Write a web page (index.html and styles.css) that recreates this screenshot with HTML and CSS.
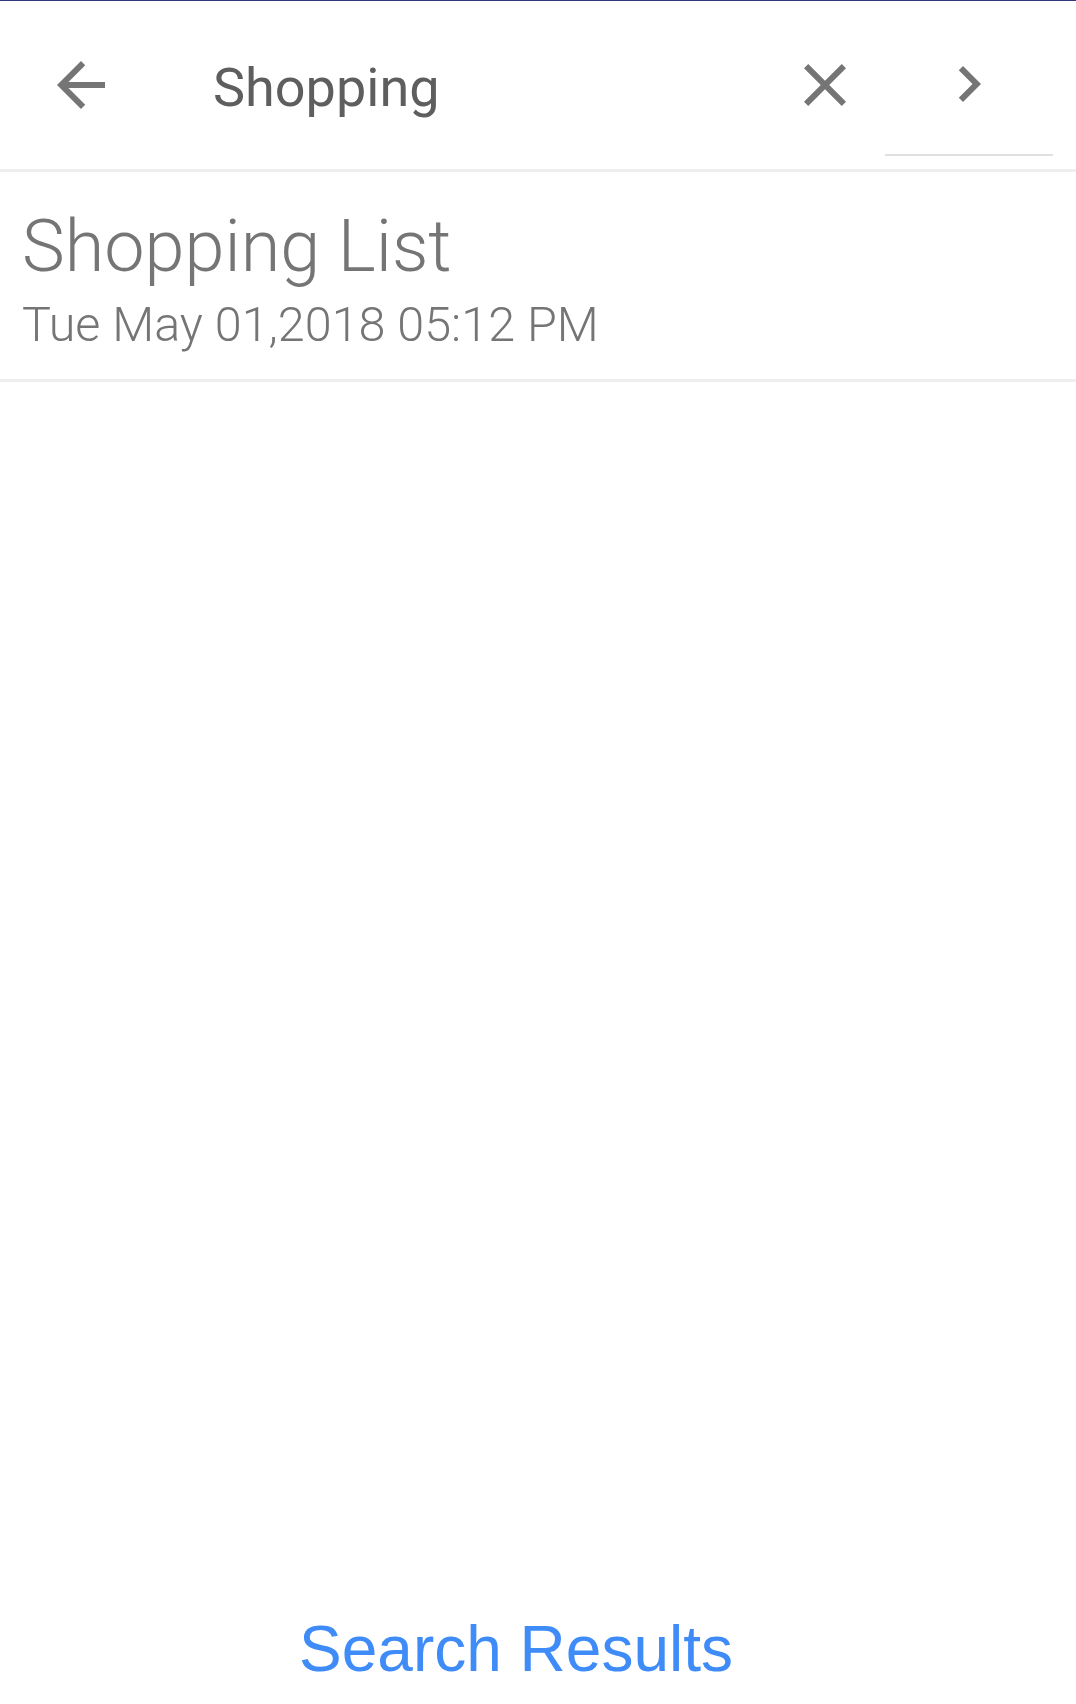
FILE: index.html
```html
<!DOCTYPE html>
<html lang="en">
<head>
  <meta charset="UTF-8" />
  <meta name="viewport" content="width=device-width, initial-scale=1.0" />
  <title>Search</title>
  <link rel="stylesheet" href="styles.css">
</head>
<body>
  <div id="app">
    <div class="toolbar">
      <button class="icon-btn back" aria-label="Back">
        <svg viewBox="0 0 24 24" width="72" height="72"><path d="M20 11H7.83l5.59-5.59L12 4l-8 8 8 8 1.41-1.41L7.83 13H20v-2z"/></svg>
      </button>
      <div class="query">Shopping</div>
      <button class="icon-btn clear" aria-label="Clear">
        <svg viewBox="0 0 24 24" width="72" height="72"><path d="M19 6.41L17.59 5 12 10.59 6.41 5 5 6.41 10.59 12 5 17.59 6.41 19 12 13.41 17.59 19 19 17.59 13.41 12z"/></svg>
      </button>
      <div class="next-wrap">
        <button class="icon-btn next" aria-label="Next">
          <svg viewBox="0 0 24 24" width="72" height="72"><path d="M10 6L8.59 7.41 13.17 12l-4.58 4.59L10 18l6-6z"/></svg>
        </button>
      </div>
    </div>

    <div class="result">
      <div class="result-title">Shopping List</div>
      <div class="result-date">Tue May 01,2018 05:12 PM</div>
    </div>

    <div class="footer">Search Results</div>
  </div>
</body>
</html>
```

FILE: styles.css
```css
body {
  margin: 0;
  background: #fff;
  font-family: Roboto, "Noto Sans", sans-serif;
}
#app {
  min-height: 1704px;
  display: flex;
  flex-direction: column;
  border-top: 1px solid #2f387a;
  box-sizing: border-box;
}
.toolbar {
  height: 171px;
  display: flex;
  align-items: center;
  border-bottom: 3px solid #eeeeee;
  box-sizing: border-box;
}
.icon-btn {
  background: none;
  border: none;
  padding: 0;
  width: 72px;
  height: 72px;
  cursor: pointer;
  fill: #757575;
}
.icon-btn svg {
  display: block;
}
.back {
  margin-left: 45px;
}
.query {
  flex: 1;
  margin-left: 96px;
  padding-top: 4px;
  font-size: 54px;
  color: #5e5e5e;
}
.clear {
  margin-right: 24px;
}
.next-wrap {
  align-self: flex-start;
  width: 168px;
  height: 155px;
  margin-right: 23px;
  padding: 47px 0 0 48px;
  box-sizing: border-box;
  border-bottom: 2px solid #e0e0e0;
}
.result {
  padding: 31px 22px 24px;
  border-bottom: 3px solid #eeeeee;
  color: #757575;
  font-weight: 300;
}
.result-title {
  font-size: 72px;
  line-height: 88px;
}
.result-date {
  margin-top: 4px;
  font-size: 48.5px;
  line-height: 60px;
}
.footer {
  margin-top: auto;
  padding: 0 44px 18px 0;
  text-align: center;
  font-family: "Liberation Sans", Arial, sans-serif;
  font-size: 64px;
  color: #3f8cf9;
}
```
